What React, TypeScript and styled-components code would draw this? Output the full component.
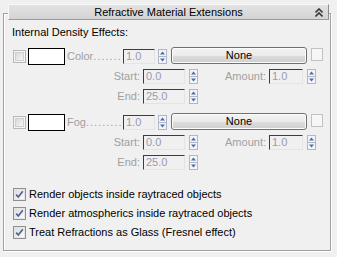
import React from "react";
import styled, { createGlobalStyle } from "styled-components";

const Global = createGlobalStyle`
  html, body { margin: 0; padding: 0; background: #f0f0f0; }
  body { font-family: "Liberation Sans", Arial, sans-serif; font-size: 11px; color: #000; }
`;

const Page = styled.div`
  width: 337px;
  height: 257px;
  padding: 13px 0 0 3px;
  box-sizing: border-box;
  background: #f0f0f0;
`;

const Frame = styled.div`
  width: 328px;
  box-sizing: border-box;
  border: 1px solid #a0a0a0;
  box-shadow: inset 1px 1px 0 #fff, 1px 1px 0 #fff;
  padding-bottom: 8px;
`;

const Header = styled.div`
  position: relative;
  margin: -10px 1px 0 4px;
  height: 16px;
  box-sizing: border-box;
  display: flex;
  align-items: center;
  justify-content: center;
  background: linear-gradient(#e2e2e2, #d4d4d4);
  border-top: 1px solid #f8f8f8;
  border-left: 1px solid #f8f8f8;
  border-right: 1px solid #8c8c8c;
  border-bottom: 1px solid #9a9a9a;
  font-size: 11px;
  line-height: 14px;
`;

const Collapse = styled.svg`
  position: absolute;
  right: 5px;
  top: 3px;
`;

const Heading = styled.div`
  margin-top: 6px;
  padding-left: 8px;
  line-height: 13px;
`;

const Block = styled.div<{ $top: number }>`
  margin-top: ${(p) => p.$top}px;
`;

const MainRow = styled.div`
  display: flex;
  align-items: center;
  height: 20px;
  padding-left: 9px;
`;

const SubRow = styled.div`
  display: flex;
  align-items: center;
  height: 20px;
`;

const Swatch = styled.div`
  width: 37px;
  height: 17px;
  box-sizing: border-box;
  margin-left: 2px;
  border: 1px solid #000;
  background: #fff;
`;

const DotLabel = styled.div`
  width: 56px;
  margin-left: 2px;
  color: #a0a0a0;
  white-space: nowrap;
  overflow: hidden;
  line-height: 13px;
`;

const Dots = styled.span`
  letter-spacing: 1px;
`;

const SideLabel = styled.div<{ $w: number }>`
  width: ${(p) => p.$w}px;
  margin-right: 3px;
  text-align: right;
  color: #a0a0a0;
  line-height: 13px;
`;

const Field = styled.div<{ $w: number }>`
  width: ${(p) => p.$w}px;
  height: 15px;
  box-sizing: border-box;
  border-style: solid;
  border-width: 1px;
  border-color: #3c3c3c #e4e4e4 #e4e4e4 #3c3c3c;
  background: #f0f0f0;
  color: #9a9ab4;
  padding-left: 2px;
  line-height: 13px;
`;

const SpinBox = styled.svg<{ $gap: number }>`
  margin-left: ${(p) => p.$gap}px;
  flex: none;
`;

const MapButton = styled.div`
  width: 136px;
  height: 17px;
  margin-left: 4px;
  margin-bottom: 2px;
  box-sizing: border-box;
  border: 1px solid #707070;
  border-radius: 3px;
  background: linear-gradient(#f2f2f2 0%, #ebebeb 50%, #dddddd 51%, #cfcfcf 100%);
  box-shadow: inset 0 0 0 1px #fcfcfc;
  display: flex;
  align-items: center;
  justify-content: center;
  line-height: 13px;
`;

const EmptyBox = styled.div`
  width: 12px;
  height: 13px;
  margin-left: 4px;
  margin-bottom: 3px;
  box-sizing: border-box;
  border: 1px solid #c2c2c2;
  background: #f6f6f6;
`;

const Options = styled.div`
  margin-top: 13px;
`;

const OptionRow = styled.div`
  display: flex;
  align-items: center;
  height: 19px;
  padding-left: 9px;
  gap: 3px;
  line-height: 13px;
`;

const CheckSvg = styled.svg`
  flex: none;
`;

function DisabledCheck() {
  return (
    <CheckSvg width="13" height="13" viewBox="0 0 13 13">
      <defs>
        <linearGradient id="dcg" x1="0" y1="0" x2="1" y2="1">
          <stop offset="0" stopColor="#d8d8d8" />
          <stop offset="1" stopColor="#f6f6f6" />
        </linearGradient>
      </defs>
      <rect x="0.5" y="0.5" width="12" height="12" fill="#f4f4f4" stroke="#b8b8b8" />
      <rect x="2.5" y="2.5" width="8" height="8" fill="url(#dcg)" stroke="#cfcfcf" />
    </CheckSvg>
  );
}

function CheckedBox() {
  return (
    <CheckSvg width="13" height="13" viewBox="0 0 13 13">
      <defs>
        <linearGradient id="ccg" x1="0" y1="0" x2="1" y2="1">
          <stop offset="0" stopColor="#dcdcdc" />
          <stop offset="1" stopColor="#fbfbfb" />
        </linearGradient>
      </defs>
      <rect x="0.5" y="0.5" width="12" height="12" fill="#f4f4f4" stroke="#8f8f8f" />
      <rect x="1.5" y="1.5" width="10" height="10" fill="url(#ccg)" stroke="#e6e6e6" />
      <path d="M3.2 6.6 L5.3 9 L9.8 3.3" fill="none" stroke="#4e6390" strokeWidth="1.7" />
    </CheckSvg>
  );
}

function Spinner({ gap }: { gap: number }) {
  return (
    <SpinBox $gap={gap} width="9" height="15" viewBox="0 0 9 15">
      <rect x="0.5" y="0.5" width="8" height="14" fill="#f2f4f8" stroke="#b0b8c8" />
      <line x1="1" y1="7.5" x2="8" y2="7.5" stroke="#b0b8c8" />
      <path d="M4.5 2.5 L7 5.5 L2 5.5 Z" fill="#4a6cb4" />
      <path d="M2 9.5 L7 9.5 L4.5 12.5 Z" fill="#4a6cb4" />
    </SpinBox>
  );
}

function EffectBlock({ name, dots, top }: { name: string; dots: string; top: number }) {
  return (
    <Block $top={top}>
      <MainRow>
        <DisabledCheck />
        <Swatch />
        <DotLabel>
          {name}
          <Dots>{dots}</Dots>
        </DotLabel>
        <Field $w={32}>1.0</Field>
        <Spinner gap={3} />
        <MapButton>None</MapButton>
        <EmptyBox />
      </MainRow>
      <SubRow>
        <SideLabel $w={136}>Start:</SideLabel>
        <Field $w={42}>0.0</Field>
        <Spinner gap={4} />
        <SideLabel $w={68}>Amount:</SideLabel>
        <Field $w={34}>1.0</Field>
        <Spinner gap={4} />
      </SubRow>
      <SubRow>
        <SideLabel $w={136}>End:</SideLabel>
        <Field $w={42}>25.0</Field>
        <Spinner gap={4} />
      </SubRow>
    </Block>
  );
}

export default function App() {
  return (
    <>
      <Global />
      <Page>
        <Frame>
          <Header>
            Refractive Material Extensions
            <Collapse width="8" height="9" viewBox="0 0 8 9">
              <path d="M0.5 4.5 L4 1 L7.5 4.5" fill="none" stroke="#3a3a3a" strokeWidth="1.6" />
              <path d="M0.5 8.5 L4 5 L7.5 8.5" fill="none" stroke="#3a3a3a" strokeWidth="1.6" />
            </Collapse>
          </Header>
          <Heading>Internal Density Effects:</Heading>
          <EffectBlock name="Color" dots="......." top={7} />
          <EffectBlock name="Fog" dots="........." top={6} />
          <Options>
            <OptionRow>
              <CheckedBox />
              Render objects inside raytraced objects
            </OptionRow>
            <OptionRow>
              <CheckedBox />
              Render atmospherics inside raytraced objects
            </OptionRow>
            <OptionRow>
              <CheckedBox />
              Treat Refractions as Glass (Fresnel effect)
            </OptionRow>
          </Options>
        </Frame>
      </Page>
    </>
  );
}
